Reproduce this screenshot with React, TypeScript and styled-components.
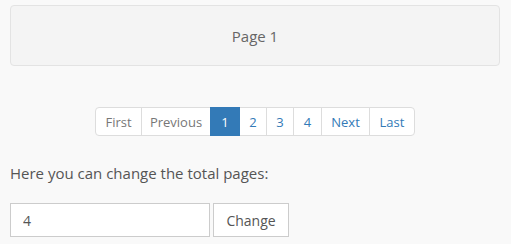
import React, { useState } from 'react';
import styled, { createGlobalStyle } from 'styled-components';

// Styles

const GlobalStyle = createGlobalStyle`
    html, body {
        margin: 0;
        padding: 0;
        background: #f9f9f9;
    }
    body {
        font-family: "Open Sans", "Liberation Sans", sans-serif;
        color: #555;
    }
`
const Page = styled.div`
    display: flex;
    flex-direction: column;
    padding: 5px 11px 0 10px;
`
const Well = styled.div`
    display: flex;
    align-items: center;
    justify-content: center;
    height: 59px;
    background: #f4f4f4;
    border: 1px solid #e3e3e3;
    border-radius: 4px;
    font-size: 15px;
    color: #666;
`
const PaginationRow = styled.div`
    display: flex;
    justify-content: center;
    margin-top: 41px;
`
const Pagination = styled.ul`
    display: flex;
    list-style: none;
    margin: 0;
    padding: 0;
`
const PageItem = styled.li<{ $active?: boolean; $disabled?: boolean; $w: number }>`
    display: flex;
    align-items: center;
    justify-content: center;
    box-sizing: border-box;
    width: ${p => p.$w}px;
    height: 29px;
    margin-left: -1px;
    border: 1px solid ${p => (p.$active ? '#337ab7' : '#ddd')};
    background: ${p => (p.$active ? '#337ab7' : '#fff')};
    color: ${p => (p.$active ? '#fff' : p.$disabled ? '#777' : '#337ab7')};
    font-size: 13px;
    position: relative;
    z-index: ${p => (p.$active ? 2 : 1)};
    cursor: pointer;

    &:first-child {
        margin-left: 0;
        border-radius: 4px 0 0 4px;
    }
    &:last-child {
        border-radius: 0 4px 4px 0;
    }
`
const Label = styled.p`
    margin: 27px 0 0;
    font-size: 15px;
    color: #555;
`
const FormRow = styled.div`
    display: flex;
    gap: 3px;
    margin-top: 20px;
`
const Input = styled.input`
    width: 200px;
    height: 34px;
    box-sizing: border-box;
    padding: 0 12px;
    border: 1px solid #ccc;
    background: #fff;
    font-family: inherit;
    font-size: 14px;
    color: #555;
    outline: none;
`
const Button = styled.button`
    width: 76px;
    height: 34px;
    box-sizing: border-box;
    border: 1px solid #ccc;
    background: #fff;
    font-family: inherit;
    font-size: 14px;
    color: #555;
    cursor: pointer;
`

const items = [
    { label: 'First', w: 47, disabled: true },
    { label: 'Previous', w: 70, disabled: true },
    { label: '1', w: 30, active: true },
    { label: '2', w: 28 },
    { label: '3', w: 28 },
    { label: '4', w: 29 },
    { label: 'Next', w: 49 },
    { label: 'Last', w: 46 },
]

const App = () => {
    const [total, setTotal] = useState('4');
    return (
        <Page>
            <GlobalStyle />
            <Well>Page 1</Well>

            <PaginationRow>
                <Pagination>
                    {items.map(item => (
                        <PageItem
                            key={item.label}
                            $w={item.w}
                            $active={item.active}
                            $disabled={item.disabled}
                        >
                            {item.label}
                        </PageItem>
                    ))}
                </Pagination>
            </PaginationRow>

            <Label>Here you can change the total pages:</Label>

            <FormRow>
                <Input value={total} onChange={e => setTotal(e.target.value)} />
                <Button>Change</Button>
            </FormRow>
        </Page>
    );
};

export default App;
